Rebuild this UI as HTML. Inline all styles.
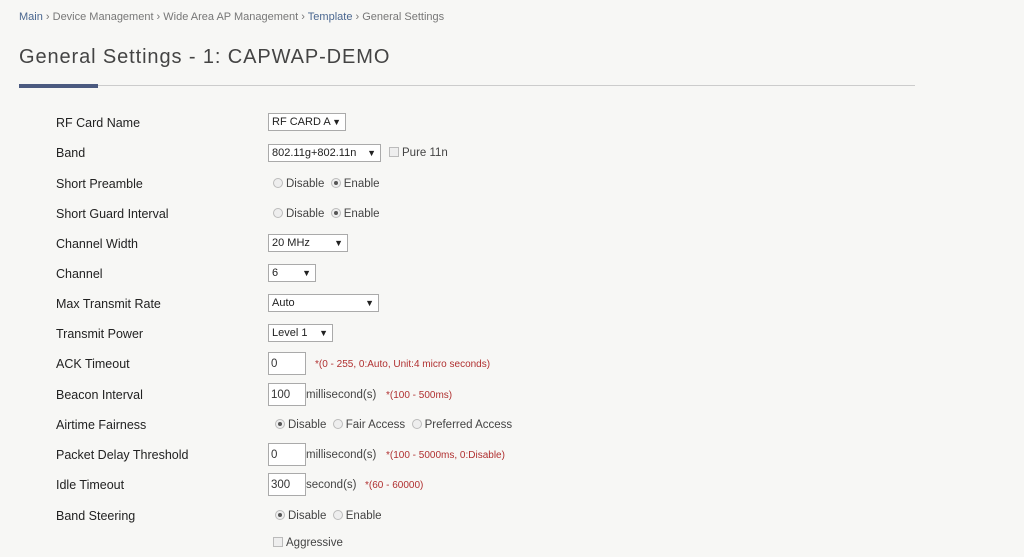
<!DOCTYPE html><html><head><style>
body{margin:0;width:1024px;height:557px;background:#f7f7f5;font-family:"Liberation Sans",sans-serif;position:relative;overflow:hidden;color:#333}
.a{position:absolute;white-space:nowrap}
.bc{left:19px;top:11px;font-size:11px;color:#777}
.bc b{font-weight:normal;color:#4a6790}
.t{left:19px;top:46px;font-size:20px;letter-spacing:0.9px;color:#444}
.l{left:56px;font-size:12.5px;color:#222}
.s{height:18px;border:1px solid #aaa;background:#fff;font-size:11px;line-height:17px;padding-left:3px;box-sizing:border-box;color:#222}
.s i{position:absolute;right:4px;top:0;font-style:normal;font-size:9px}
.in{height:23px;border:1px solid #aaa;background:#fff;font-size:11.5px;line-height:22px;padding-left:2px;box-sizing:border-box;width:38px}
.tx{font-size:11.5px;color:#444}
.r{color:#b03030;font-size:10px}
.rb{display:inline-block;width:10px;height:10px;border-radius:50%;border:1px solid #bbb;background:#eee;vertical-align:-1px;margin-right:3px;box-sizing:border-box;position:relative}
.rb.on:after{content:"";position:absolute;left:2px;top:2px;width:4px;height:4px;border-radius:50%;background:#555}
.cb{display:inline-block;width:10px;height:10px;border:1px solid #bbb;background:#eee;vertical-align:-1px;margin-right:3px;box-sizing:border-box}
</style></head><body>
<div class="a bc"><b>Main</b> › Device Management › Wide Area AP Management › <b>Template</b> › General Settings</div>
<div class="a t">General Settings - 1: CAPWAP-DEMO</div>
<div class="a" style="left:19px;top:85px;width:896px;height:1px;background:#ccc"></div>
<div class="a" style="left:19px;top:84px;width:79px;height:4px;background:#4b5a80"></div>

<div class="a l" style="top:116px">RF Card Name</div>
<div class="a s" style="left:268px;top:113px;width:78px">RF CARD A<i>▼</i></div>
<div class="a l" style="top:146px">Band</div>
<div class="a s" style="left:268px;top:144px;width:113px">802.11g+802.11n<i>▼</i></div>
<div class="a tx" style="left:389px;top:147px"><span class="cb"></span>Pure 11n</div>
<div class="a l" style="top:177px">Short Preamble</div>
<div class="a tx" style="left:273px;top:178px"><span class="rb"></span>Disable &nbsp;<span class="rb on"></span>Enable</div>
<div class="a l" style="top:207px">Short Guard Interval</div>
<div class="a tx" style="left:273px;top:208px"><span class="rb"></span>Disable &nbsp;<span class="rb on"></span>Enable</div>
<div class="a l" style="top:237px">Channel Width</div>
<div class="a s" style="left:268px;top:234px;width:80px">20 MHz<i>▼</i></div>
<div class="a l" style="top:267px">Channel</div>
<div class="a s" style="left:268px;top:264px;width:48px">6<i>▼</i></div>
<div class="a l" style="top:297px">Max Transmit Rate</div>
<div class="a s" style="left:268px;top:294px;width:111px">Auto<i>▼</i></div>
<div class="a l" style="top:327px">Transmit Power</div>
<div class="a s" style="left:268px;top:324px;width:65px">Level 1<i>▼</i></div>
<div class="a l" style="top:357px">ACK Timeout</div>
<div class="a in" style="left:268px;top:352px">0</div>
<div class="a r" style="left:315px;top:359px">*(0 - 255, 0:Auto, Unit:4 micro seconds)</div>
<div class="a l" style="top:388px">Beacon Interval</div>
<div class="a in" style="left:268px;top:383px">100</div>
<div class="a tx" style="left:306px;top:389px">millisecond(s)</div>
<div class="a r" style="left:386px;top:390px">*(100 - 500ms)</div>
<div class="a l" style="top:418px">Airtime Fairness</div>
<div class="a tx" style="left:275px;top:419px"><span class="rb on"></span>Disable &nbsp;<span class="rb"></span>Fair Access &nbsp;<span class="rb"></span>Preferred Access</div>
<div class="a l" style="top:448px">Packet Delay Threshold</div>
<div class="a in" style="left:268px;top:443px">0</div>
<div class="a tx" style="left:306px;top:449px">millisecond(s)</div>
<div class="a r" style="left:386px;top:450px">*(100 - 5000ms, 0:Disable)</div>
<div class="a l" style="top:478px">Idle Timeout</div>
<div class="a in" style="left:268px;top:473px">300</div>
<div class="a tx" style="left:306px;top:479px">second(s)</div>
<div class="a r" style="left:365px;top:480px">*(60 - 60000)</div>
<div class="a l" style="top:509px">Band Steering</div>
<div class="a tx" style="left:275px;top:510px"><span class="rb on"></span>Disable &nbsp;<span class="rb"></span>Enable</div>
<div class="a tx" style="left:273px;top:537px"><span class="cb"></span>Aggressive</div>
</body></html>
